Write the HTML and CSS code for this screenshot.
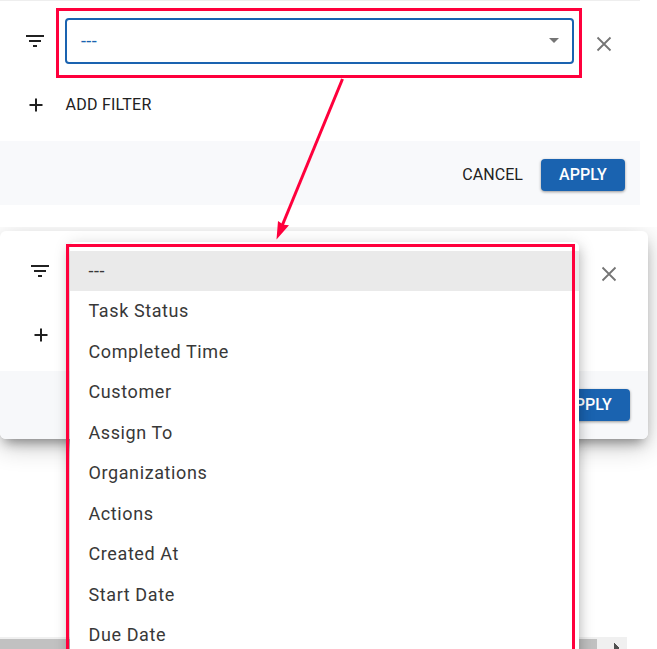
FILE: index.html
```html
<!DOCTYPE html>
<html lang="en">
<head>
<meta charset="utf-8">
<title>Task filters</title>
<link rel="stylesheet" href="styles.css">
</head>
<body>
<section class="panel">
  <div class="panel-body">
    <svg class="icon" viewBox="0 0 24 24"><path d="M3 6h18v2H3zM6 11h12v2H6zM10 16h4v2h-4z"/></svg>
    <div class="select"><span>---</span><i class="caret"></i></div>
    <svg class="icon close" viewBox="0 0 24 24"><path d="M5.5 5.5l13 13M18.500 5.500l-13 13"/></svg>
  </div>
  <div class="add-row">
    <svg class="icon" viewBox="0 0 24 24"><path d="M5.500 11h13v2h-13zM11 5.500h2v13h-2z"/></svg>
    <span>ADD FILTER</span>
  </div>
  <div class="actions"><button class="cancel">CANCEL</button><button class="apply">APPLY</button></div>
</section>

<section class="stage">
  <div class="card">
    <div class="card-body">
      <svg class="icon" viewBox="0 0 24 24"><path d="M3 6h18v2H3zM6 11h12v2H6zM10 16h4v2h-4z"/></svg>
      <svg class="icon close" viewBox="0 0 24 24"><path d="M5.5 5.5l13 13M18.500 5.500l-13 13"/></svg>
    </div>
    <div class="card-add">
      <svg class="icon" viewBox="0 0 24 24"><path d="M5.500 11h13v2h-13zM11 5.500h2v13h-2z"/></svg>
    </div>
    <div class="card-actions"><button class="apply">APPLY</button></div>
  </div>
  <div class="scrollbar"><div class="thumb"></div></div>
  <ul class="menu">
    <li class="selected">---</li>
    <li>Task Status</li>
    <li>Completed Time</li>
    <li>Customer</li>
    <li>Assign To</li>
    <li>Organizations</li>
    <li>Actions</li>
    <li>Created At</li>
    <li>Start Date</li>
    <li>Due Date</li>
  </ul>
</section>

<div class="mark mark-field"></div>
<div class="mark mark-menu"></div>
<svg class="pointer" viewBox="0 0 80 170"><path class="line" d="M72.500 9L12 156"/><path class="head" d="M6.500 169.500L8 151l5.500 3.800 5.500.5z"/></svg>
<svg class="cursor" viewBox="0 0 6 8"><path d="M0 0h1v1h1v1h1v1h1v1h1v0v3H0z"/></svg>
</body>
</html>
```
FILE: styles.css
```css
* { box-sizing: border-box; }
body {
  margin: 0;
  width: 657px;
  height: 649px;
  overflow: hidden;
  position: relative;
  background: #fff;
  color: #212121;
  font-family: Roboto, sans-serif;
}
.icon { display: block; flex: none; width: 24px; height: 24px; fill: #212121; }
.close { fill: none; stroke: #757575; stroke-width: 1.8; }

.panel { width: 640px; height: 205px; border-top: 1px solid #eee; }
.panel-body { display: flex; height: 82px; padding: 17px 0 0 23px; }
.panel-body .icon:first-child { margin-top: 11px; }
.panel-body .close { margin: 14px 0 0 18px; }
.select {
  display: flex;
  align-items: center;
  justify-content: space-between;
  width: 509px;
  height: 46px;
  margin-left: 18px;
  padding: 0 13px 2px 14px;
  border: 2px solid #1a63b0;
  border-radius: 4px;
  color: #1a63b0;
  font-size: 18px;
  letter-spacing: .4px;
}
.caret { border: 5px solid transparent; border-top-color: #757575; border-bottom: 0; }
.add-row {
  display: flex;
  align-items: center;
  height: 58px;
  padding: 0 0 15px 24px;
  font-size: 16px;
  letter-spacing: .25px;
}
.add-row span { margin-left: 17.5px; }
.actions {
  display: flex;
  justify-content: flex-end;
  align-items: center;
  height: 64px;
  padding: 4px 15px 0 0;
  background: #f8f9fb;
}
button { border: 0; font: 16px Roboto, sans-serif; padding: 0; }
.cancel { background: none; color: #212121; margin-right: 18px; padding-bottom: 2px; letter-spacing: .05px; }
.apply {
  width: 84px;
  height: 32px;
  padding-bottom: 2px;
  border-radius: 4px;
  background: #1a63b0;
  color: #fff;
  font-weight: 500;
  letter-spacing: .1px;
  box-shadow: 0 1px 3px rgba(0,0,0,.4);
}

.stage { position: relative; height: 422px; margin-top: 22px; padding-top: 4px; overflow: hidden; }
.card {
  width: 648px;
  height: 208px;
  overflow: hidden;
  border-radius: 6px;
  background: #fff;
  box-shadow: 0 8px 12px -5px rgba(0,0,0,.38), 0 7px 26px rgba(0,0,0,.24);
}
.card-body { display: flex; justify-content: space-between; height: 92px; padding: 28px 27px 0 28px; }
.card-body .close { margin-top: 3px; }
.card-add { height: 48px; padding-left: 29px; }
.card-actions { display: flex; justify-content: flex-end; height: 68px; padding: 18px 18px 0 0; background: #f7f8fa; }
.scrollbar {
  display: flex;
  width: 627px;
  height: 17px;
  margin-top: 198px;
  padding-top: 2px;
  background: #f0f0f0;
}
.thumb { width: 597px; background: #c1c1c1; }
.menu {
  position: absolute;
  left: 70px;
  top: 15px;
  width: 509px;
  height: 460px;
  margin: 0;
  padding: 9px 0;
  list-style: none;
  border-radius: 5px;
  background: #fff;
  box-shadow: 0 5px 5px -3px rgba(0,0,0,.2), 0 8px 12px 1px rgba(0,0,0,.16), 0 3px 16px 2px rgba(0,0,0,.12);
}
.menu li {
  height: 40.5px;
  padding-left: 18.5px;
  line-height: 40px;
  font-size: 18px;
  letter-spacing: .6px;
  color: #383838;
}
.menu .selected { height: 40px; background: #eaeaea; letter-spacing: .5px; }

.mark { position: absolute; border: 3px solid #ff003c; }
.mark-field { left: 56px; top: 8px; width: 526px; height: 70px; }
.mark-menu { left: 66px; top: 244px; width: 509px; height: 420px; }
.pointer { position: absolute; left: 270px; top: 70px; width: 80px; height: 170px; }
.line { stroke: #ff003c; stroke-width: 3; }
.head { fill: #ff003c; }
.cursor { position: absolute; left: 614px; top: 643px; width: 6px; height: 8px; fill: #505050; }
```
